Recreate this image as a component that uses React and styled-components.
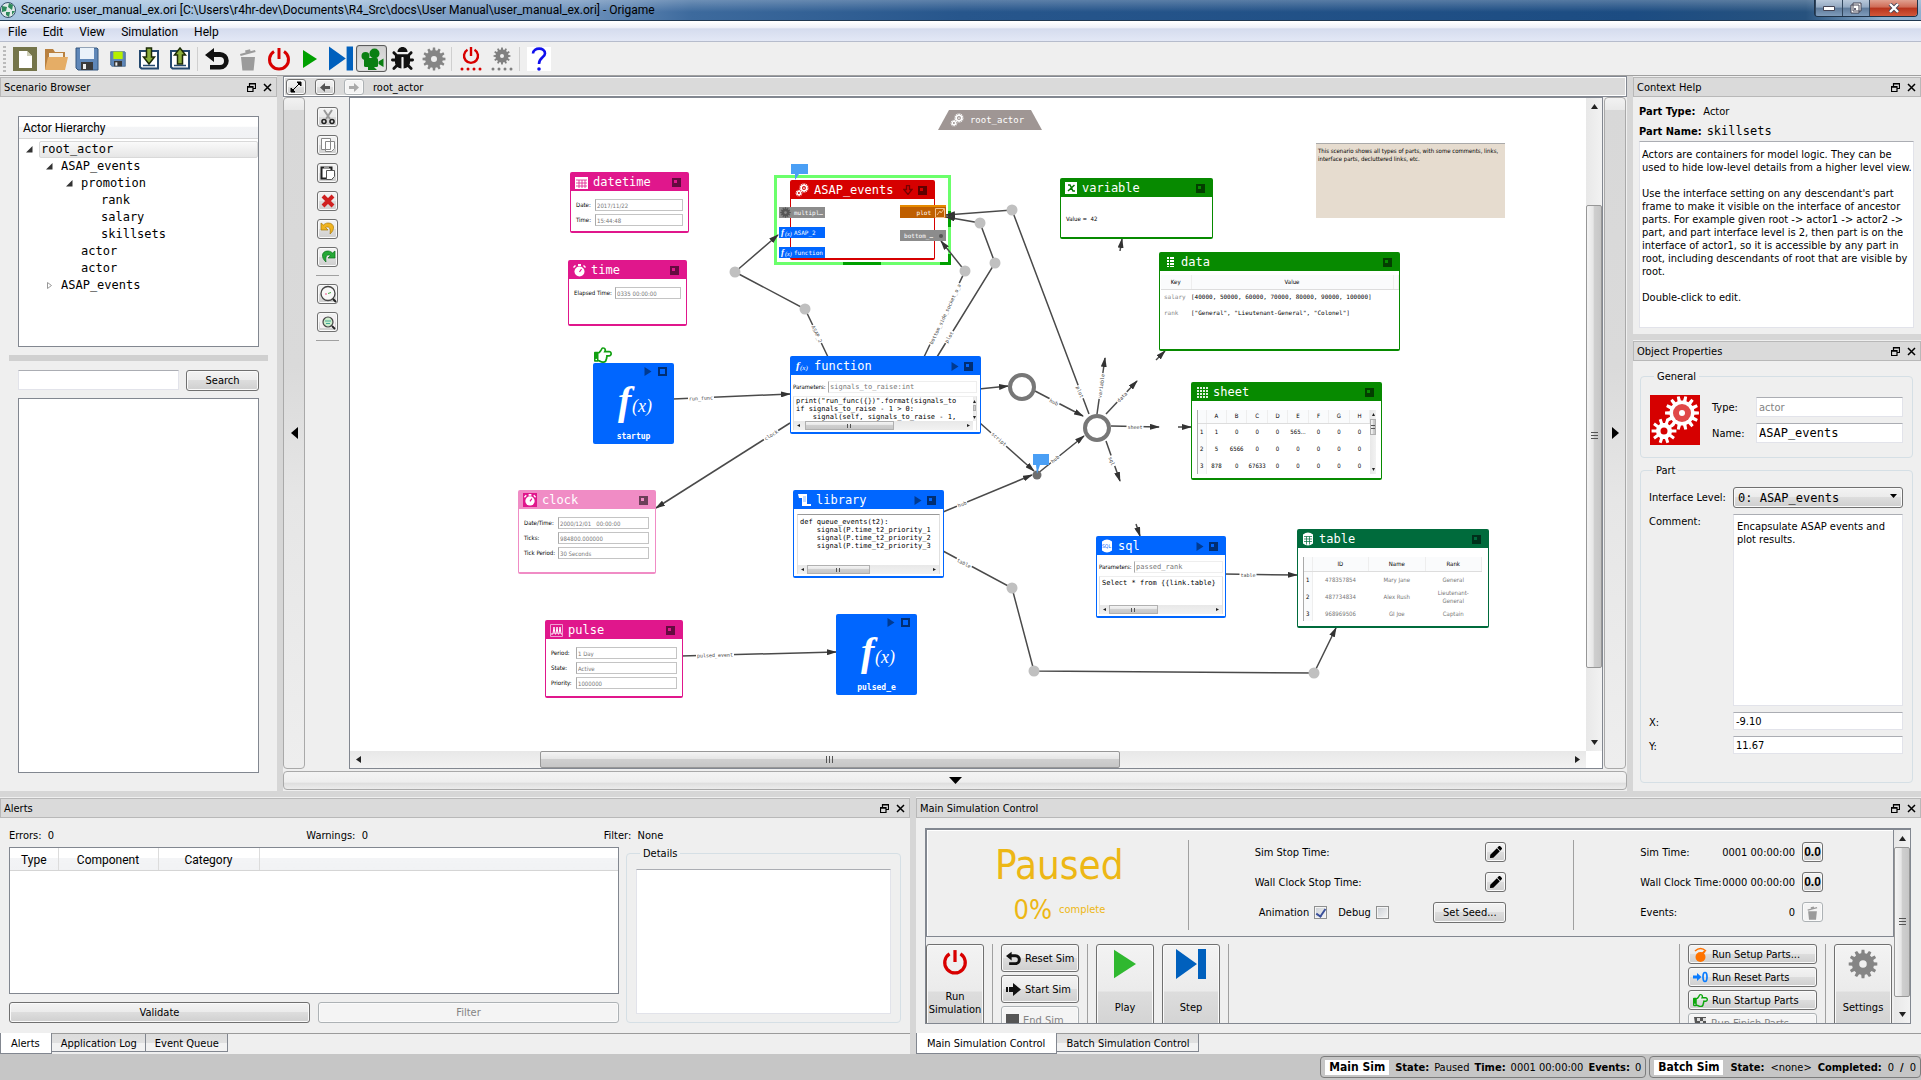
import React from "react";
import styled, { createGlobalStyle, css } from "styled-components";
import { FaBug, FaRegHandPointRight, FaPen } from "react-icons/fa";

const UI = '"DejaVu Sans Condensed", "Noto Sans", sans-serif';
const SEGOE = 'Roboto, "Open Sans", sans-serif';
const MONO = '"DejaVu Sans Mono", "Liberation Mono", monospace';
const SERIF = '"Liberation Serif", "DejaVu Serif", serif';

const PINK = "#e0178c";
const BLUE = "#0066ff";
const GREEN = "#078a00";

const Global = createGlobalStyle`
  * { box-sizing: border-box; }
  body { margin: 0; background: #efefef; }
  button, input, select, textarea { font: inherit; color: inherit; margin: 0; padding: 0; border-radius: 0; }
  svg { display: block; flex: none; }
`;

/* ---------- window chrome ---------- */

const Window = styled.div`
  height: 100vh;
  display: flex;
  flex-direction: column;
  background: #efefef;
  color: #000;
  font: 11px/13px ${UI};
  overflow: hidden;
`;

const TitleBar = styled.header`
  flex: none;
  height: 21px;
  display: flex;
  align-items: center;
  gap: 5px;
  padding: 0 3px 0 0;
  border-bottom: 1px solid #203850;
  font: 12px/16px ${SEGOE};
  background: linear-gradient(rgba(255, 255, 255, 0.25), rgba(255, 255, 255, 0) 60%),
    linear-gradient(90deg, #a9c6e2 0, #9dbbd9 18%, #7c9dc4 24%, #6f93bd 30%, #3d6a9d 36%, #27568c 50%, #1c4c82 85%, #27527e 94%, #8fb0cf 98%);
`;

const TitleText = styled.h1`
  margin: 0;
  flex: 1;
  font: inherit;
  white-space: nowrap;
`;

const Caption = styled.div`
  display: flex;
  align-self: flex-start;
  height: 17px;
  border: 1px solid #1e3248;
  border-top: 0;
  border-radius: 0 0 4px 4px;
  overflow: hidden;
`;

const CaptionButton = styled.button`
  width: ${(p) => (p.$close ? 48 : 27)}px;
  display: grid;
  place-items: center;
  border: 0;
  border-left: 1px solid #32475e;
  background: ${(p) =>
    p.$close
      ? "linear-gradient(#e0a090 0, #cf6a55 45%, #b7331c 50%, #d3573a 100%)"
      : "linear-gradient(#b8c8da 0, #93a9c2 45%, #5f7b9b 50%, #7f9cbb 100%)"};
`;

const MenuBar = styled.nav`
  flex: none;
  height: 21px;
  display: flex;
  align-items: center;
  gap: 16px;
  padding: 0 8px;
  border-top: 1px solid #fff;
  border-bottom: 1px solid #b6bccc;
  background: linear-gradient(#fff 0, #eef0f8 30%, #d5dcee 36%, #e3e8f6 100%);
  font: 12px/16px ${SEGOE};
`;

const MenuButton = styled.button`
  border: 0;
  background: none;
`;

const Toolbar = styled.div`
  flex: none;
  height: 34px;
  display: flex;
  align-items: center;
  border-bottom: 1px solid #a0a0a0;
`;

const Grip = styled.div`
  width: 3px;
  height: 26px;
  margin: 0 3px;
  background: repeating-linear-gradient(#bbb 0 2px, transparent 2px 4px);
`;

const ToolButton = styled.button`
  width: 31px;
  height: 27px;
  display: grid;
  place-items: center;
  border: 1px solid transparent;
  border-radius: 3px;
  background: none;
  ${(p) =>
    p.$pressed &&
    css`
      border-color: #5c5c5c;
      background: linear-gradient(#cfcfcf, #e6e6e6);
      box-shadow: inset 0 0 1px #777;
    `}
`;

const ToolSep = styled.div`
  width: 1px;
  height: 24px;
  margin: 0 3px 0 2px;
  background: #cfcfcf;
`;

/* ---------- docks ---------- */

const Middle = styled.main`
  flex: 1;
  min-height: 0;
  display: flex;
`;

const HSplit = styled.div`
  flex: none;
  height: 6px;
  background: #d6d6d6;
`;

const VSplit = styled.div`
  flex: none;
  width: 6px;
  background: #d6d6d6;
`;

const Dock = styled.section`
  flex: ${(p) => p.$flex || "none"};
  width: ${(p) => p.$width || "auto"};
  min-width: 0;
  min-height: 0;
  display: flex;
  flex-direction: column;
`;

const DockTitle = styled.header`
  flex: none;
  height: 20px;
  display: flex;
  align-items: center;
  gap: 5px;
  margin-top: 1px;
  padding: 0 3px;
  border: 1px solid #b8b8b8;
  background: #dadada;
`;

const DockName = styled.h2`
  flex: 1;
  margin: 0;
  font: inherit;
`;

const IconButton = styled.button`
  width: 11px;
  height: 11px;
  display: grid;
  place-items: center;
  border: 0;
  background: none;
`;

const raised = css`
  border: 1px solid ${(p) => (p.disabled ? "#adb2b5" : "#707070")};
  border-radius: 3px;
  color: ${(p) => (p.disabled ? "#838383" : "#000")};
  background: ${(p) => (p.disabled ? "#f4f4f4" : "linear-gradient(#f3f3f3 0, #ebebeb 49%, #dddddd 50%, #cfcfcf 100%)")};
  box-shadow: inset 0 0 0 1px #fafafa;
`;

const sunken = css`
  border: 1px solid #e2e3ea;
  border-top-color: #abadb3;
  background: #fff;
`;

const PushButton = styled.button`
  ${raised}
  height: ${(p) => p.$height || 21}px;
  width: ${(p) => p.$width || "auto"};
  flex: ${(p) => p.$flex || "none"};
  display: flex;
  align-items: center;
  justify-content: ${(p) => (p.$left ? "flex-start" : "center")};
  gap: 4px;
  padding: 0 ${(p) => (p.$left ? 4 : 0)}px;
  white-space: nowrap;
`;

const TextField = styled.input`
  ${sunken}
  width: 100%;
  min-width: 0;
  height: ${(p) => p.$height || 20}px;
  padding: 0 2px;
  color: ${(p) => (p.readOnly ? "#838383" : "#000")};
  font-family: ${(p) => (p.$mono ? MONO : UI)};
  font-size: ${(p) => (p.$mono ? 12 : 11)}px;
`;

const TextArea = styled.textarea`
  ${sunken}
  display: block;
  width: 100%;
  flex: 1;
  min-height: 0;
  padding: ${(p) => p.$pad || "5px 3px"};
  resize: none;
  outline: 0;
`;

const Group = styled.fieldset`
  margin: 0;
  min-width: 0;
  border: 1px solid #d5dfe5;
  border-radius: 4px;
  padding: ${(p) => p.$pad};
  display: flex;
  flex-direction: ${(p) => (p.$column ? "column" : "row")};
  flex: ${(p) => p.$flex || "none"};
  gap: 12px;
`;

const Legend = styled.legend`
  margin-left: 4px;
  padding: 0 3px;
`;

/* ---------- scenario browser ---------- */

const BrowserBody = styled.div`
  flex: 1;
  min-height: 0;
  display: flex;
  flex-direction: column;
  padding: 19px 9px 18px;
`;

const Box = styled.div`
  border: 1px solid #828790;
  background: #fff;
  margin: 0 9px;
  flex: ${(p) => p.$flex};
`;

const BoxHead = styled.div`
  height: 22px;
  padding: 2px 4px 0;
  border-bottom: 1px solid #d5d5d5;
  background: linear-gradient(#fff 0, #fff 45%, #f3f4f6 46%, #f1f2f4 100%);
  font: 12px/18px ${SEGOE};
`;

const Tree = styled.ul`
  margin: 0;
  padding: 2px 0 0;
  list-style: none;
  font: 12px/17px ${MONO};
`;

const TreeItem = styled.li`
  display: flex;
  align-items: center;
  height: 17px;
  padding-left: ${(p) => 7 + p.$depth * 20}px;
`;

const Twisty = styled.span`
  width: 13px;
`;

const TreeLabel = styled.span`
  flex: 1;
  padding-left: 1px;
  border: 1px solid ${(p) => (p.$selected ? "#d9d9d9" : "transparent")};
  border-radius: 2px;
  line-height: 15px;
  background: ${(p) => (p.$selected ? "linear-gradient(#fafafa, #e6e6e6)" : "none")};
`;

const Bar = styled.div`
  flex: none;
  height: 6px;
  margin: 8px 0 9px;
  background: #d0d0d0;
`;

const SearchRow = styled.form`
  display: flex;
  gap: 7px;
  margin: 0 9px 7px;
`;

/* ---------- canvas area ---------- */

const Center = styled.section`
  flex: 1;
  min-width: 0;
  display: flex;
  flex-direction: column;
`;

const PathBar = styled.div`
  flex: none;
  height: 21px;
  display: flex;
  align-items: center;
  gap: 9px;
  padding: 1px 2px 0;
  border: 1px solid #828790;
  box-shadow: inset 0 0 0 1px #fff;
  background: #dadada;
`;

const CanvasRow = styled.div`
  flex: 1;
  min-height: 0;
  display: flex;
  padding-right: 1px;
`;

const Strip = styled.button`
  flex: none;
  display: grid;
  place-items: center;
  border: 1px solid #a9a9a9;
  border-radius: 4px;
  ${(p) =>
    p.$horizontal
      ? css`
          height: 19px;
          margin: 2px 0 1px;
          background: linear-gradient(#f4f4f4 0, #eee 60%, #dedede 65%, #ececec 100%);
        `
      : css`
          width: 22px;
          background: linear-gradient(#f2f2f2 0, #e8e8e8 12px, #d8d8d8 12px, #dadada 40%, #e6e6e6 60%, #eee 100%);
        `}
`;

const Tools = styled.div`
  flex: none;
  width: 44px;
  display: flex;
  flex-direction: column;
  align-items: center;
  gap: 8px;
  padding: 10px 0 0 1px;
`;

const ToolsRule = styled.div`
  width: 23px;
  height: 1px;
  background: #a0a0a0;
`;

const CanvasFrame = styled.div`
  flex: 1;
  min-width: 0;
  display: grid;
  grid-template: 1fr 17px / 1fr 16px;
  margin-right: 1px;
  border: 1px solid #828790;
  background: #fff;
`;

const Scene = styled.div`
  position: relative;
  overflow: hidden;
  background: #fff;
`;

const Scroll = styled.div`
  display: flex;
  flex-direction: ${(p) => (p.$h ? "row" : "column")};
  align-items: stretch;
  background: ${(p) => (p.$h ? "linear-gradient(#e8e8e8, #f2f2f2)" : "linear-gradient(90deg, #e8e8e8, #f2f2f2)")};
  min-width: 0;
  min-height: 0;
`;

const ScrollEnd = styled.button`
  flex: none;
  ${(p) => (p.$h ? "width" : "height")}: ${(p) => p.$size}px;
  display: grid;
  place-items: center;
  border: 0;
  background: none;
`;

const Thumb = styled.div`
  flex: ${(p) => p.$grow} 1 0;
  display: grid;
  place-items: center;
  border: 1px solid ${(p) => (p.$small ? "#b0b0b0" : "#979797")};
  border-radius: ${(p) => (p.$small ? 0 : 2)}px;
  background: linear-gradient(${(p) => (p.$h ? "180deg" : "90deg")}, #f4f4f4 0, #e6e6e6 45%, #cfcfcf 50%, #c6c6c6 100%);
`;

const Space = styled.div`
  flex: ${(p) => p.$grow} 1 0;
`;

const GripLines = styled.span`
  ${(p) =>
    p.$h
      ? `width: ${p.$size}px; height: ${p.$size - 1}px; background: repeating-linear-gradient(90deg, #555 0 1px, transparent 1px 3px);`
      : `height: ${p.$size}px; width: ${p.$size - 1}px; background: repeating-linear-gradient(#555 0 1px, transparent 1px 3px);`}
`;

/* ---------- scene parts ---------- */

// Scene coordinates of the point shown at the viewport's top-left corner.
const ORIGIN = { x: 350, y: 98 };

const Placed = styled.div`
  position: absolute;
  left: ${(p) => p.$x - ORIGIN.x}px;
  top: ${(p) => p.$y - ORIGIN.y}px;
  width: ${(p) => p.$w}px;
  height: ${(p) => p.$h}px;
`;

const Part = styled(Placed)`
  display: flex;
  flex-direction: column;
  border: 1px solid ${(p) => p.$color};
  border-bottom-width: 2px;
  border-radius: 2px;
  background: #fff;
`;

const PartHead = styled.div`
  flex: none;
  height: 18px;
  display: flex;
  align-items: center;
  gap: 5px;
  padding: 0 7px 0 4px;
  background: ${(p) => p.$color};
  color: #fff;
  font: 12px/16px ${MONO};
`;

const PartTitle = styled.span`
  flex: 1;
  white-space: nowrap;
`;

const PartBody = styled.div`
  flex: 1;
  min-height: 0;
  display: flex;
  flex-direction: column;
  gap: 3px;
  padding: ${(p) => p.$pad};
  font-size: 6px;
  line-height: 8px;
`;

const Field = styled.label`
  display: grid;
  grid-template-columns: ${(p) => p.$label}px 1fr;
  align-items: center;
  white-space: nowrap;
`;

const TinyInput = styled.input`
  width: 100%;
  min-width: 0;
  height: 12px;
  padding: 0 1px;
  border: 1px solid ${(p) => (p.$mono ? "#eee" : "#c4c4c4")};
  border-left-color: #aaa;
  background: #fff;
  color: #777;
  font-family: ${(p) => (p.$mono ? MONO : UI)};
  font-size: ${(p) => (p.$mono ? 7 : 6)}px;
`;

const CodeBox = styled.div`
  flex: 1;
  min-height: 0;
  display: grid;
  grid-template: minmax(0, 1fr) 9px / minmax(0, 1fr) auto;
  border: 1px solid #e0e0e0;
  border-width: 1px 1px 0;
  border-top-color: ${(p) => (p.$line ? "#999" : "#eee")};
  overflow: hidden;
`;

const Code = styled.pre`
  margin: 0;
  padding: ${(p) => p.$top || 0}px 0 0 2px;
  overflow: hidden;
  font: 7px/8px ${MONO};
`;

const FxTile = styled(Placed)`
  display: flex;
  flex-direction: column;
  align-items: center;
  border-radius: 2px;
  background: ${BLUE};
  color: #fff;
`;

const TileTools = styled.div`
  align-self: flex-end;
  display: flex;
  align-items: center;
  gap: 6px;
  padding: 4px 7px 2px 0;
`;

const TileName = styled.span`
  font: bold 8px/10px ${MONO};
  margin-top: auto;
  padding-bottom: 2px;
`;

const Selection = styled(Placed)`
  border: 3px solid #6bff6b;
`;

const SelectionMark = styled(Placed)`
  background: #00a000;
`;

const Ports = styled.div`
  position: absolute;
  top: ${(p) => (p.$side === "left" ? 26 : 24)}px;
  ${(p) => p.$side}: -12px;
  display: flex;
  flex-direction: column;
  gap: ${(p) => (p.$side === "left" ? 9 : 12)}px;
`;

const Port = styled.div`
  width: 46px;
  height: ${(p) => (p.$tall ? 13 : 11)}px;
  display: flex;
  align-items: center;
  justify-content: ${(p) => (p.$end ? "flex-end" : "flex-start")};
  gap: ${(p) => p.$gap || 0}px;
  padding: 0 1px;
  border-top: ${(p) => (p.$tall ? "2px solid #e68a00" : "0")};
  background: ${(p) => p.$color};
  color: #fff;
  font: 6px/9px ${MONO};
`;

const Banner = styled(Placed)`
  display: flex;
  align-items: center;
  justify-content: center;
  gap: 6px;
  padding-right: 6px;
  background: #9f9694;
  clip-path: polygon(11px 0, 93px 0, 100% 100%, 0 100%);
  color: #fff;
  font: 9px/12px ${MONO};
`;

const Note = styled(Placed)`
  padding: 3px 2px;
  border-top: 1px solid #aaa;
  background: #e6dccf;
  font-size: 6px;
  line-height: 8px;
`;

const LinkLayer = styled.svg`
  position: absolute;
  inset: 0;
  width: 100%;
  height: 100%;
`;

const Grid = styled.table`
  width: 100%;
  border-collapse: collapse;
  table-layout: fixed;
  font-size: 6px;
  line-height: 8px;
  text-align: center;
  th { padding: 0; font-weight: normal; height: ${(p) => p.$head}px; background: #fafbfc; border-right: 1px solid #eee; }
  thead th { border-bottom: 1px solid #ddd; }
  td { padding: 0; height: ${(p) => p.$row}px; color: ${(p) => p.$color || "#000"}; white-space: pre-line; }
`;

const Col = styled.col`
  width: ${(p) => p.$w}px;
`;

const DataTable = styled(Grid)`
  td { text-align: left; font-family: ${MONO}; white-space: nowrap; }
  td:first-child { color: #888; padding-left: 3px; }
`;

const GridRow = styled.div`
  display: flex;
  border-left: 1px solid #aaa;
  min-height: 0;
  overflow: hidden;
`;

/* ---------- bottom docks ---------- */

const Bottom = styled.div`
  flex: none;
  height: 257px;
  display: flex;
`;

const Tabs = styled.div`
  flex: none;
  height: 21px;
  display: flex;
  align-items: flex-start;
  border-top: 1px solid #9b9b9b;
`;

const Tab = styled.button`
  padding: 0 ${(p) => (p.$active ? 11 : 8)}px 0 ${(p) => (p.$active ? 10 : 9)}px;
  height: ${(p) => (p.$active ? 21 : 18)}px;
  border: 1px solid #828790;
  border-width: 0 1px 1px ${(p) => (p.$active ? 1 : 0)}px;
  margin-top: ${(p) => (p.$active ? -1 : 0)}px;
  padding-top: 1px;
  background: ${(p) => (p.$active ? "#fff" : "linear-gradient(#dcdcdc 0, #e0e0e0 50%, #f2f2f2 55%, #f2f2f2 100%)")};
`;

const AlertsBody = styled.div`
  flex: 1;
  min-height: 0;
  display: flex;
  flex-direction: column;
  padding: 11px 9px 10px;
`;

const Counts = styled.div`
  display: grid;
  grid-template-columns: 1fr 1fr 1fr;
  height: 14px;
`;

const AlertsColumns = styled.div`
  flex: 1;
  min-height: 0;
  display: grid;
  grid-template-columns: 610px 1fr;
  gap: 7px;
  margin-top: 4px;
`;

const AlertsLeft = styled.div`
  display: flex;
  flex-direction: column;
  gap: 8px;
`;

const AlertsTableBox = styled.div`
  flex: 1;
  border: 1px solid #828790;
  background: #fff;
`;

const AlertsTable = styled.table`
  width: 100%;
  border-collapse: collapse;
  table-layout: fixed;
  font: 12px/16px ${SEGOE};
  th {
    height: 22px;
    padding: 3px 0 0;
    font-weight: normal;
    border-right: 1px solid #dcdcdc;
    border-bottom: 1px solid #d5d5d5;
    background: linear-gradient(#fff 0, #fff 45%, #f3f4f6 46%, #f1f2f4 100%);
  }
  th:last-child { border-right: 0; }
`;

const Buttons = styled.div`
  display: flex;
  gap: 8px;
`;

const SimFrame = styled.div`
  flex: 1;
  min-height: 0;
  display: flex;
  margin: 10px 10px 9px 9px;
  border: 1px solid #828790;
  border-width: 2px 1px 1px;
`;

const SimMain = styled.div`
  flex: 1;
  min-width: 0;
  display: flex;
  flex-direction: column;
  overflow: hidden;
`;

const SimInfo = styled.div`
  flex: none;
  height: 107px;
  display: grid;
  grid-template-columns: minmax(0, 261fr) 1px minmax(0, 385fr) 1px minmax(0, 319fr);
  padding: 10px 0;
  border: 1px solid #828790;
  border-width: 0 1px 1px;
  box-shadow: inset 1px 1px 0 #fff;
`;

const SimState = styled.div`
  display: flex;
  flex-direction: column;
  align-items: center;
  padding-left: 4px;
  color: #edb715;
`;

const Paused = styled.div`
  font-size: 40px;
  line-height: 50px;
`;

const Percent = styled.div`
  display: flex;
  align-items: center;
  gap: 7px;
  font-size: 27px;
  line-height: 40px;
`;

const Small = styled.span`
  font-size: 11px;
`;

const Rule = styled.div`
  flex: none;
  width: 1px;
  align-self: stretch;
  background: #a0a0a0;
`;

const SimCol = styled.div`
  display: flex;
  flex-direction: column;
  gap: 10px;
  padding: 2px ${(p) => p.$right}px 0 66px;
`;

const SimRow = styled.div`
  display: flex;
  align-items: center;
  height: 20px;
  gap: 7px;
  white-space: nowrap;
`;

const Fill = styled.span`
  flex: 1;
  min-width: 0;
`;

const CheckLabel = styled.label`
  display: flex;
  align-items: center;
  gap: 5px;
  margin-left: 4px;
`;

const Check = styled.input`
  appearance: none;
  position: relative;
  width: 13px;
  height: 13px;
  border: 1px solid #8e8f8f;
  background: linear-gradient(135deg, #cbcfd5, #f6f6f6);
  box-shadow: inset 0 0 0 1px #f4f4f4;
  &:checked::after {
    content: "";
    position: absolute;
    left: 3px;
    top: 0;
    width: 4px;
    height: 8px;
    border: solid #3a4f9a;
    border-width: 0 2px 2px 0;
    transform: rotate(35deg);
  }
`;

const SimActions = styled.div`
  flex: none;
  display: flex;
  align-items: flex-start;
  gap: 8px;
  padding: 7px 2px 0 0;
  height: 120px;
`;

const BigButton = styled.button`
  ${raised}
  flex: none;
  width: 58px;
  height: 96px;
  display: flex;
  flex-direction: column;
  align-items: center;
  padding: 4px 0 0;
`;

const BigLabel = styled.span`
  flex: 1;
  display: grid;
  place-items: center;
  padding-bottom: ${(p) => (p.$two ? 8 : 4)}px;
`;

const Stack = styled.div`
  display: flex;
  flex-direction: column;
  gap: 3px;
`;

const SimScroll = styled.div`
  flex: none;
  width: 16px;
  display: grid;
`;

const StatusBar = styled.footer`
  flex: none;
  height: 26px;
  display: flex;
  justify-content: flex-end;
  gap: 3px;
  padding: 2px 0;
  background: #c6c6c6;
`;

const StatusBox = styled.div`
  display: flex;
  align-items: center;
  gap: ${(p) => p.$gap}px;
  padding: 0 4px;
  border: 1px solid #7c7c7c;
  border-radius: 4px;
  white-space: nowrap;
`;

const StatusName = styled.b`
  padding: 1px 4px;
  margin-right: 1px;
  background: #fff;
  font-size: 12px;
`;

/* ---------- properties ---------- */

const HelpBody = styled.div`
  flex: 1;
  min-height: 0;
  display: flex;
  flex-direction: column;
  padding: 4px 7px 6px 6px;
`;

const HelpLine = styled.div`
  display: flex;
  gap: ${(p) => (p.$mono ? 5 : 8)}px;
  height: 20px;
  align-items: center;
`;

const Mono = styled.span`
  font: 12px/14px ${MONO};
`;

const PropsBody = styled.div`
  flex: 1;
  min-height: 0;
  display: flex;
  flex-direction: column;
  gap: 6px;
  padding: 9px 8px 8px 7px;
`;

const PropGrid = styled.div`
  flex: 1;
  min-height: 0;
  display: grid;
  grid-template-columns: ${(p) => p.$label}px 1fr;
  grid-template-rows: ${(p) => p.$rows};
  gap: 6px 0;
  padding-top: ${(p) => p.$top || 0}px;
`;

const PropLabel = styled.label`
  padding-top: ${(p) => (p.$tall ? 1 : 4)}px;
  white-space: nowrap;
`;

const SelectWrap = styled.div`
  position: relative;
  svg { position: absolute; right: 6px; top: 7px; }
`;

const Select = styled.select`
  ${raised}
  appearance: none;
  width: 100%;
  height: 21px;
  padding: 0 4px;
  font: 12px/16px ${MONO};
`;

/* ---------- drawings ---------- */

function gearPath(cx, cy, outer, inner, hole, teeth) {
  const step = Math.PI / teeth;
  const pts = [];
  for (let i = 0; i < teeth; i++) {
    const a = i * 2 * step;
    [[inner, -0.62], [outer, -0.38], [outer, 0.38], [inner, 0.62]].forEach(([r, k]) => {
      pts.push(`${(cx + r * Math.cos(a + k * step)).toFixed(2)} ${(cy + r * Math.sin(a + k * step)).toFixed(2)}`);
    });
  }
  return `M${pts.join("L")}ZM${cx - hole} ${cy}a${hole} ${hole} 0 1 0 ${hole * 2} 0a${hole} ${hole} 0 1 0 ${-hole * 2} 0Z`;
}

const Svg = ({ s = 24, w, h, vb = "0 0 24 24", children }) => (
  <svg width={w || s} height={h || s} viewBox={vb} aria-hidden="true">{children}</svg>
);

const Gear = ({ s = 24, color = "#858585" }) => (
  <Svg s={s}><path fillRule="evenodd" fill={color} d={gearPath(12, 12, 11.5, 8.8, 3, 12)} /></Svg>
);

const Gears = ({ s, disc }) => (
  <Svg s={s} vb="0 0 50 50">
    <path fillRule="evenodd" fill="#fff" d={gearPath(32, 18, 17, 12.5, 7, 14)} />
    <path fillRule="evenodd" fill="#fff" d={gearPath(14, 36, 12.5, 8, 3.5, 10)} />
    {disc && <circle cx="32" cy="18" r="9" fill="#e04848" />}
    <circle cx="32" cy="18" r="3" fill="#fff" />
  </Svg>
);

const Power = ({ s = 24, color = "#d80000" }) => (
  <Svg s={s}><g fill="none" stroke={color} strokeWidth="3"><path d="M7 4.5a9.5 9.5 0 1 0 10 0" /><path d="M12 1v11" /></g></Svg>
);

const Trash = ({ s = 24, color = "#9b9b9b" }) => (
  <Svg s={s}><g fill={color}><path d="M4 7l15-4 .6 2L4.6 9zM9 3.6l5-1.4.6 2-5 1.3zM5 10h14l-1.4 13.5H6.4z" /></g></Svg>
);

const Back = ({ s = 24 }) => (
  <Svg s={s}><path d="M0 8L9 1v4h6a8.500 8.500 0 0 1 0 17.500H5v-4.500h10a4 4 0 0 0 0-8H9v5z" fill="#111" /></Svg>
);

const Play = ({ w = 14, h = 18, color = "#00a000" }) => (
  <Svg w={w} h={h} vb="0 0 14 18"><path d="M0 0L14 9L0 18Z" fill={color} /></Svg>
);

const StepIcon = ({ w = 24, h = 25 }) => (
  <Svg w={w} h={h} vb="0 0 30 30"><path d="M0 0L21 15L0 30ZM22 0h8v30h-8z" fill="#0060bd" /></Svg>
);

const Restore = () => (
  <Svg s={9} vb="0 0 9 9"><path d="M2.500 3V.5h6v5H6M2.500 1h6M.5 3.500h5.500v5H.5zM.5 4.200h5.500" fill="none" stroke="#000" strokeWidth="1.200" /></Svg>
);

const Close = () => (
  <Svg s={9} vb="0 0 9 9"><path d="M1 1l7 7M8 1l-7 7" stroke="#000" strokeWidth="1.500" /></Svg>
);

const Tri = ({ dir, w = 8, h = 5, color = "#222" }) => {
  const shapes = { up: "0,10 5,0 10,10", down: "0,0 10,0 5,10", left: "10,0 0,5 10,10", right: "0,0 10,5 0,10" };
  return (
    <svg width={w} height={h} viewBox="0 0 10 10" preserveAspectRatio="none" aria-hidden="true">
      <polygon points={shapes[dir]} fill={color} />
    </svg>
  );
};

const Floppy = ({ s = 24, label = "#eaf2fa" }) => (
  <Svg s={s}>
    <path d="M1 1h21l1 1v21H3l-2-2z" fill="#5f87b8" stroke="#34577f" />
    <path d="M5 1h14v11H5z" fill={label} />
    <path d="M6 15h12v8H6z" fill="#3a3a3a" /><path d="M8 17h3v5H8z" fill="#eee" />
  </Svg>
);

const BoxArrow = ({ up }) => (
  <Svg>
    <path d="M3 4h18v17.500H4.500L3 20z" fill="#fff" stroke="#24486e" strokeWidth="2" />
    <path d="M6 18.500h12" stroke="#24486e" strokeWidth="1.500" />
    <path d={up ? "M12 1l5.500 7h-3v9h-5V8h-3z" : "M12 17l5.500-7h-3V1h-5v9h-3z"} fill="#8aad3a" stroke="#1c2b08" strokeWidth="1.500" />
  </Svg>
);

const Dotted = ({ color, children }) => (
  <Svg>
    {children}
    {[3, 9, 15, 21].map((x) => <circle key={x} cx={x} cy="22" r="1.500" fill={color} />)}
  </Svg>
);

const TOOLBAR = [
  ["New", <Svg><path fill="#75754a" d="M0 0h24v24H0z" /><path fill="#fff" d="M6 4h8l5 5v12H6z" /><path fill="#cfcfb8" d="M14 4v5h5z" /></Svg>],
  ["Open", <Svg><path fill="#b98140" d="M1 2h8l2 3h10v17H1z" /><path fill="#f5f0e6" d="M5 6h14v8H5z" /><path fill="#e5ad66" d="M4 10h20l-3 13H1z" /></Svg>],
  ["Save", <Floppy />],
  ["Save as", <Floppy s={16} label="#b6f000" />],
  ["Import", <BoxArrow />],
  ["Export", <BoxArrow up />],
  null,
  ["Undo", <Back />],
  ["Delete", <Trash />],
  ["Run", <Power />],
  ["Play", <Play />],
  ["Step", <StepIcon />],
  ["Animation", <Svg><g fill="#0a7f12"><circle cx="14.500" cy="6.500" r="5" /><circle cx="5.500" cy="9" r="4" /><rect x="4" y="11" width="14" height="9" rx="1.500" /><path d="M18.500 14.500l5-3v8.500l-5-3zM8 20h6l3 3H8z" /></g></Svg>, true],
  ["Debug", <FaBug size={23} color="#111" />],
  ["Settings", <Gear />],
  null,
  ["Run batch", <Dotted color="#d80000"><g fill="none" stroke="#d80000" strokeWidth="2.400"><path d="M8.500 2.800a7 7 0 1 0 7 0" /><path d="M12 0v9" /></g></Dotted>],
  ["Batch settings", <Dotted color="#808080"><path fillRule="evenodd" fill="#808080" d={gearPath(12, 9, 8.5, 6.5, 2, 12)} /></Dotted>],
  null,
  ["Help", <Svg><path fill="#fff" d="M0 0h24v24H0z" /><path d="M6 6.500C6.500 0 18 0 18 6.500c0 4-6 4-6 10.500" fill="none" stroke="#1010ee" strokeWidth="2.600" /><circle cx="12" cy="22" r="1.800" fill="#1010ee" /></Svg>],
];

const EDIT_TOOLS = [
  ["Cut", <Svg s={16} vb="0 0 16 16"><path d="M4 1l6 9M12 1l-6 9" stroke="#999" strokeWidth="2" /><g fill="none" stroke="#222" strokeWidth="1.600"><circle cx="4" cy="12.500" r="2" /><circle cx="12" cy="12.500" r="2" /></g></Svg>],
  ["Copy", <Svg s={16} vb="0 0 16 16"><path d="M1.500 1.500h9v11h-9zM5.500 4.500h9v7l-3 3h-6z" fill="#fff" stroke="#888" /></Svg>],
  ["Paste", <Svg s={16} vb="0 0 16 16"><path d="M1.500 2.500h10v11h-10z" fill="#fff" stroke="#222" strokeWidth="2" /><path d="M4 1h5v3H4z" fill="#999" /><path d="M6.500 5.500h8v6l-3 3h-5z" fill="#fff" stroke="#555" /></Svg>],
  ["Remove", <Svg s={14} vb="0 0 14 14"><path d="M2 2l10 10M12 2L2 12" stroke="#d02020" strokeWidth="4" /></Svg>],
  ["Undo", <Svg s={16} vb="0 0 16 16"><path d="M1 2v7h7L5.500 6.500C9 5 11 7 10 13c5-4 5-11-2-11-2 0-3.500 1-4.500 2z" fill="#f0b420" stroke="#a87808" strokeWidth=".7" /></Svg>],
  ["Redo", <Svg s={16} vb="0 0 16 16"><path d="M15 2v7H8l2.500-2.500C7 5 5 7 6 13c-5-4-5-11 2-11 2 0 3.500 1 4.500 2z" fill="#25a835" stroke="#0a7018" strokeWidth=".7" /></Svg>],
  null,
  ["Zoom to fit", <Svg s={18} vb="0 0 18 18"><circle cx="9" cy="8.500" r="7" fill="#f8f8f8" stroke="#444" strokeWidth="1.300" /><path d="M14 14l3 3" stroke="#222" strokeWidth="2" /><path d="M6 9h2" stroke="#e58" /><path d="M9 8.500l3-1" stroke="#4a4" /></Svg>],
  ["Zoom to selection", <Svg s={18} vb="0 0 18 18"><path d="M1 4h15v11H1z" fill="#f6f0f4" /><circle cx="9" cy="9" r="5" fill="#cdeccc" stroke="#444" strokeWidth="1.200" /><path d="M13 13l3 3" stroke="#222" strokeWidth="1.800" /><path d="M6 8h6M7 10.500h4" stroke="#4a9" /></Svg>],
  null,
];

const ICONS = {
  calendar: <Svg s={13} vb="0 0 13 13"><path d="M0 1h13v12H0z" fill="#fff" /><path d="M1 4h11M1 7h11M1 10h11M4 4v8M7 4v8M10 4v8" stroke={PINK} strokeWidth=".8" /></Svg>,
  watch: <Svg s={13} vb="0 0 13 13"><circle cx="6.500" cy="7.500" r="5" fill="#fff" /><path d="M5 0h3v2H5zM0 3l2-2 1 1-2 2zM13 3l-2-2-1 1 2 2z" fill="#fff" /><path d="M6.500 8l2-3" stroke={PINK} strokeWidth="1.200" /></Svg>,
  clock: <Svg s={14} vb="0 0 15 15"><path d="M0 0h15v15H0z" fill={PINK} /><circle cx="7.500" cy="8.500" r="5" fill="#fff" /><path d="M6 1h3v2H6zM1 4l2-2 1 1-2 2zM14 4l-2-2-1 1 2 2z" fill="#fff" /><path d="M7.500 9l2-3" stroke={PINK} strokeWidth="1.200" /></Svg>,
  pulse: <Svg s={13} vb="0 0 13 13"><path d="M.5.5h12v12H.5z" fill="none" stroke="#f0a0d0" /><path d="M1 10h2l1-7 1 7h1l1-7 1 7h1l1-7 1 7h1" fill="none" stroke="#fff" /></Svg>,
  fx: <Svg w={14} h={14} vb="0 0 14 14"><text x="1" y="10" fill="#fff" fontFamily={SERIF} fontStyle="italic" fontWeight="bold" fontSize="11">f</text><text x="5" y="11" fill="#fff" fontFamily={SERIF} fontStyle="italic" fontSize="7">(x)</text></Svg>,
  portFx: <Svg w={14} h={11} vb="0 0 14 11"><text x="1" y="8" fill="#fff" fontFamily={SERIF} fontStyle="italic" fontWeight="bold" fontSize="9">f</text><text x="5" y="9" fill="#fff" fontFamily={SERIF} fontStyle="italic" fontSize="6">(x)</text></Svg>,
  gears: <Gears s={14} />,
  scroll: <Svg s={13} vb="0 0 13 13"><path d="M0 0h9v10h4v2H4V4H1z" fill="#fff" /><path d="M5 3h3M5 5h3M5 7h3" stroke="#8ab8ff" /></Svg>,
  x: <Svg s={12} vb="0 0 12 12"><path d="M0 0h12v12H0z" fill="#fff" /><path d="M3 3h2l3 6h2M9.500 3L3 9" fill="none" stroke="#067800" strokeWidth="1.500" /></Svg>,
  list: <Svg s={12} vb="0 0 12 12"><path d="M3 1h2v2H3zM6 1h4v2H6zM3 4h2v2H3zM6 4h4v2H6zM3 7h2v2H3zM6 7h4v2H6zM3 10h2v1H3zM6 10h4v1H6z" fill="#fff" /></Svg>,
  grid: <Svg s={12} vb="0 0 12 12">{[1, 4, 7, 10].map((y) => <path key={y} d={`M1 ${y}h2v2H1zM4 ${y}h2v2H4zM7 ${y}h2v2H7zM10 ${y}h2v2H10z`} fill="#dff0df" />)}</Svg>,
  sql: <Svg w={12} h={14} vb="0 0 12 14"><path d="M1 2.500q5-4 10 0v9q-5 4-10 0z" fill="#fff" /><text x="1" y="9" fontSize="5" fontFamily={UI} fill={BLUE}>SQL</text></Svg>,
  table: <Svg w={12} h={14} vb="0 0 12 14"><path d="M1 2.500q5-4 10 0v9q-5 4-10 0z" fill="#fff" /><path d="M2 4.500h8M2 7h8M2 9.500h8M4.500 4.500v8M7.500 4.500v8" stroke="#006b3c" strokeWidth=".7" /></Svg>,
};

const MiniMark = ({ open }) => (
  <Svg s={9} vb="0 0 9 9">
    <path d="M1 1h7v7H1z" fill="none" stroke="#000" strokeOpacity=".55" strokeWidth="2" />
    {!open && <path d="M5 2h2v5H2V5h3z" fill="#000" fillOpacity=".55" />}
  </Svg>
);

function Scrollbar({ h, before, thumb, after, size = 17, grip = 8 }) {
  const small = size < 12;
  const [w, t] = small ? [3, 3] : [h ? 5 : 7, h ? 7 : 5];
  return (
    <Scroll $h={h}>
      <ScrollEnd type="button" $h={h} $size={size} aria-label={h ? "Scroll left" : "Scroll up"}><Tri dir={h ? "left" : "up"} w={w} h={t} /></ScrollEnd>
      <Space $grow={before} />
      <Thumb $h={h} $grow={thumb} $small={small}>{grip > 0 && <GripLines $h={h} $size={grip} />}</Thumb>
      <Space $grow={after} />
      <ScrollEnd type="button" $h={h} $size={size} aria-label={h ? "Scroll right" : "Scroll down"}><Tri dir={h ? "right" : "down"} w={w} h={t} /></ScrollEnd>
    </Scroll>
  );
}

/* ---------- scene content ---------- */

const LINKS = [
  { pts: [[673, 399], [790, 394]], label: "run_func", at: [701, 398] },
  { pts: [[828, 357], [805, 309], [735, 272], [778, 235]], label: "ASAP_2", at: [817, 334] },
  { pts: [[924, 357], [965, 271], [941, 241]], label: "bottom_side_socket_o_a", at: [945, 314] },
  { pts: [[937, 357], [995, 263], [980, 223], [946, 217]], label: "plot", at: [949, 337] },
  { pts: [[1089, 414], [1012, 210], [946, 215]], label: "plot", at: [1080, 392] },
  { pts: [[1097, 414], [1105, 358]], label: "variable", at: [1101, 386] },
  { pts: [[1106, 414], [1137, 381]], label: "data", at: [1122, 397] },
  { pts: [[1111, 426], [1159, 427]], label: "sheet", at: [1135, 427] },
  { pts: [[1106, 441], [1120, 481]], label: "sql", at: [1112, 461] },
  { pts: [[1120, 251], [1122, 239]] },
  { pts: [[1156, 360], [1165, 351]] },
  { pts: [[1178, 427], [1191, 427]] },
  { pts: [[1136, 524], [1140, 536]] },
  { pts: [[979, 389], [1008, 386]] },
  { pts: [[1035, 391], [1083, 416]], label: "hub", at: [1054, 402] },
  { pts: [[980, 423], [1034, 471]], label: "script", at: [999, 439] },
  { pts: [[1037, 474], [1084, 436]], label: "hub", at: [1055, 459] },
  { pts: [[943, 512], [1032, 475]], label: "hub", at: [962, 504] },
  { pts: [[943, 551], [1012, 588], [1034, 671], [1314, 673], [1336, 628]], label: "table", at: [964, 563] },
  { pts: [[790, 423], [656, 508]], label: "clock", at: [771, 435] },
  { pts: [[681, 656], [836, 652]], label: "pulsed_event", at: [715, 655] },
  { pts: [[1224, 574], [1297, 575]], label: "table", at: [1248, 575] },
];

const JOINTS = [[805, 309], [735, 272], [965, 271], [995, 263], [980, 223], [1012, 210], [1012, 588], [1034, 671], [1314, 673]];

function Links() {
  return (
    <LinkLayer aria-hidden="true">
      <defs>
        <marker id="head" markerUnits="userSpaceOnUse" markerWidth="10" markerHeight="6" refX="9" refY="3" orient="auto">
          <path d="M0 0L10 3L0 6Z" fill="#333" />
        </marker>
      </defs>
      <g transform={`translate(${-ORIGIN.x} ${-ORIGIN.y})`}>
        {LINKS.map(({ pts, label, at }, i) => {
          let angle = 0;
          if (label) {
            const [a, b] = pts;
            angle = (Math.atan2(b[1] - a[1], b[0] - a[0]) * 180) / Math.PI;
            if (angle > 90) angle -= 180;
            if (angle < -90) angle += 180;
          }
          const long = label ? label.length * 3 + 2 : 0;
          return (
            <g key={i}>
              <polyline points={pts.join(" ")} fill="none" stroke="#4a4a4a" strokeWidth="1.500" markerEnd="url(#head)" />
              {label && (
                <g transform={`translate(${at[0]} ${at[1]}) rotate(${angle})`}>
                  <rect x={-long / 2} y="-3" width={long} height="6" fill="#fff" />
                  <text y="2" textAnchor="middle" fontSize="5" fontFamily={MONO} fill="#444">{label}</text>
                </g>
              )}
            </g>
          );
        })}
        {JOINTS.map(([x, y]) => <circle key={`${x}-${y}`} cx={x} cy={y} r="5.500" fill="#c0c0c0" />)}
        <circle cx="1022" cy="387" r="12" fill="#fff" stroke="#777" strokeWidth="4" />
        <circle cx="1097" cy="428" r="12" fill="#fff" stroke="#777" strokeWidth="4" />
        <circle cx="1037" cy="475" r="4.500" fill="#6e6e6e" />
        <path d="M1033 454h16v11h-9l-3 9-1-9h-3z" fill="#4a9ff5" />
        <path d="M791 164h17v10h-9l-4 6v-6h-4z" fill="#4a9ff5" />
      </g>
    </LinkLayer>
  );
}

function Node({ x, y, w, h, color, icon, title, play, down, pad, children, extra }) {
  return (
    <Part $x={x} $y={y} $w={w} $h={h} $color={color}>
      <PartHead $color={color}>
        {ICONS[icon]}
        <PartTitle>{title}</PartTitle>
        {play && <Play w={8} h={9} color="#003a91" />}
        {down && <Svg s={10} vb="0 0 10 10"><path d="M3.500.5h3v4H9L5 9.500.8 4.500h2.700z" fill="none" stroke="#700" strokeWidth="1.300" /></Svg>}
        <MiniMark />
      </PartHead>
      <PartBody $pad={pad}>{children}</PartBody>
      {extra}
    </Part>
  );
}

const Row = ({ label, value, w, mono }) => (
  <Field $label={w}>
    {label}
    <TinyInput $mono={mono} readOnly value={value} />
  </Field>
);

function Tile({ x, y, name }) {
  return (
    <FxTile $x={x} $y={y} $w={81} $h={81}>
      <TileTools><Play w={8} h={9} color="#003a91" /><MiniMark open /></TileTools>
      <Svg w={48} h={50} vb="0 0 48 50">
        <text x="8" y="36" fill="#fff" fontFamily={SERIF} fontStyle="italic" fontWeight="bold" fontSize="40">f</text>
        <text x="22" y="34" fill="#fff" fontFamily={SERIF} fontStyle="italic" fontSize="18">(x)</text>
      </Svg>
      <TileName>{name}</TileName>
    </FxTile>
  );
}

const SHEET = [
  ["1", "0", "0", "0", "565...", "0", "0", "0"],
  ["5", "6566", "0", "0", "0", "0", "0", "0"],
  ["878", "0", "67633", "0", "0", "0", "0", "0"],
];

const PEOPLE = [
  ["478357854", "Mary Jane", "General"],
  ["487734834", "Alex Rush", "Lieutenant-\nGeneral"],
  ["968969506", "GI Joe", "Captain"],
];

function SceneView() {
  return (
    <Scene>
      <Selection $x={774} $y={175} $w={177} $h={90} />
      <SelectionMark $x={843} $y={262} $w={38} $h={3} />
      <SelectionMark $x={940} $y={262} $w={11} $h={3} />
      <SelectionMark $x={948} $y={211} $w={3} $h={16} />
      <SelectionMark $x={948} $y={254} $w={3} $h={11} />
      <Links />
      <Banner $x={938} $y={110} $w={104} $h={20}><Gears s={14} />root_actor</Banner>
      <Note $x={1316} $y={143} $w={189} $h={75}>This scenario shows all types of parts, with some comments, links, interface parts, decluttered links, etc.</Note>

      <Node x={570} y={172} w={119} h={61} color={PINK} icon="calendar" title="datetime" pad="8px 5px 0">
        <Row label="Date:" value="2017/11/22" w={19} />
        <Row label="Time:" value="15:44:48" w={19} />
      </Node>
      <Node x={568} y={260} w={119} h={66} color={PINK} icon="watch" title="time" pad="8px 5px 0">
        <Row label="Elapsed Time:" value="0335 00:00:00" w={41} />
      </Node>
      <Placed $x={594} $y={346} $w={18} $h={18}><FaRegHandPointRight size={18} color="#11a011" /></Placed>
      <Tile x={593} y={363} name="startup" />
      <Node x={518} y={490} w={138} h={84} color="#f08cc5" icon="clock" title="clock" pad="8px 6px 0 5px">
        <Row label="Date/Time:" value="2000/12/01   00:00:00" w={34} />
        <Row label="Ticks:" value="984800.000000" w={34} />
        <Row label="Tick Period:" value="30 Seconds" w={34} />
      </Node>
      <Node x={545} y={620} w={138} h={78} color={PINK} icon="pulse" title="pulse" pad="8px 5px 0">
        <Row label="Period:" value="1 Day" w={25} />
        <Row label="State:" value="Active" w={25} />
        <Row label="Priority:" value="1000000" w={25} />
      </Node>
      <Tile x={836} y={614} name="pulsed_e" />

      <Node x={790} y={180} w={145} h={80} color="#d60000" icon="gears" title="ASAP_events" down
        extra={
          <>
            <Ports $side="left">
              <Port $color="#8c8c8c" $gap={3}><Gear s={11} color="#555" />multipl…</Port>
              <Port $color={BLUE}>{ICONS.portFx}ASAP_2</Port>
              <Port $color={BLUE}>{ICONS.portFx}function</Port>
            </Ports>
            <Ports $side="right">
              <Port $color="#bf5f00" $tall $end $gap={4}>plot<Svg s={10} vb="0 0 10 10"><path d="M.5.5h9v9h-9zM2 7l3-4 1 2 3-4" fill="none" stroke="#f0c090" /></Svg></Port>
              <Port $color="#8c8c8c" $end $gap={4}>bottom_…<Svg s={8} vb="0 0 8 8"><circle cx="4" cy="4" r="2" fill="#555" /></Svg></Port>
            </Ports>
          </>
        }
      />
      <Node x={790} y={356} w={191} h={78} color={BLUE} icon="fx" title="function" play pad="6px 3px 2px 2px">
        <Row label="Parameters:" value="signals_to_raise:int" w={35} mono />
        <CodeBox>
          <Code>{'print("run_func({})".format(signals_to\nif signals_to_raise - 1 > 0:\n    signal(self, signals_to_raise - 1,'}</Code>
          <Scrollbar before={1} thumb={8} after={4} size={8} grip={0} />
          <Scrollbar h before={2} thumb={85} after={69} size={9} grip={5} />
        </CodeBox>
      </Node>
      <Node x={793} y={490} w={151} h={88} color={BLUE} icon="scroll" title="library" play pad="5px 3px 2px">
        <CodeBox $line>
          <Code $top={3}>{"def queue_events(t2):\n    signal(P.time_t2_priority_1\n    signal(P.time_t2_priority_2\n    signal(P.time_t2_priority_3"}</Code>
          <span />
          <Scrollbar h before={0} thumb={60} after={60} size={9} grip={5} />
        </CodeBox>
      </Node>
      <Node x={1096} y={536} w={130} h={82} color={BLUE} icon="sql" title="sql" play pad="6px 2px 2px">
        <Row label="Parameters:" value="passed_rank" w={35} mono />
        <CodeBox>
          <Code $top={2}>{"Select * from {{link.table}"}</Code>
          <span />
          <Scrollbar h before={0} thumb={47} after={56} size={9} grip={5} />
        </CodeBox>
      </Node>

      <Node x={1060} y={178} w={153} h={61} color={GREEN} icon="x" title="variable" pad="18px 5px 0">
        <span>Value =&nbsp;&nbsp;42</span>
      </Node>
      <Node x={1159} y={252} w={241} h={99} color={GREEN} icon="list" title="data" pad="4px 0 0 1px">
        <DataTable $head={14} $row={16}>
          <colgroup><Col $w={30} /><Col $w={202} /><Col /></colgroup>
          <thead><tr><th>Key</th><th>Value</th><th /></tr></thead>
          <tbody>
            <tr><td>salary</td><td>[40000, 50000, 60000, 70000, 80000, 90000, 100000]</td></tr>
            <tr><td>rank</td><td>["General", "Lieutenant-General", "Colonel"]</td></tr>
          </tbody>
        </DataTable>
      </Node>
      <Node x={1191} y={382} w={191} h={98} color={GREEN} icon="grid" title="sheet" pad="9px 5px 4px">
        <GridRow>
          <Grid $head={13} $row={17}>
            <colgroup><Col $w={8} /></colgroup>
            <thead><tr><th />{"ABCDEFGH".split("").map((c) => <th key={c}>{c}</th>)}</tr></thead>
            <tbody>{SHEET.map((r, i) => <tr key={i}><th>{i + 1}</th>{r.map((c, j) => <td key={j}>{c}</td>)}</tr>)}</tbody>
          </Grid>
          <Scrollbar before={0} thumb={17} after={35} size={9} grip={5} />
        </GridRow>
      </Node>
      <Node x={1297} y={529} w={192} h={99} color="#006b3c" icon="table" title="table" pad="9px 6px 5px 5px">
        <GridRow>
          <Grid $head={14} $row={17} $color="#777">
            <colgroup><Col $w={8} /></colgroup>
            <thead><tr><th /><th>ID</th><th>Name</th><th>Rank</th></tr></thead>
            <tbody>{PEOPLE.map((r, i) => <tr key={i}><th>{i + 1}</th>{r.map((c) => <td key={c}>{c}</td>)}</tr>)}</tbody>
          </Grid>
        </GridRow>
      </Node>
    </Scene>
  );
}

/* ---------- panels ---------- */

const Head = ({ children }) => (
  <DockTitle>
    <DockName>{children}</DockName>
    <IconButton type="button" aria-label="Float"><Restore /></IconButton>
    <IconButton type="button" aria-label="Close"><Close /></IconButton>
  </DockTitle>
);

const TREE = [
  ["root_actor", 0, "open", true],
  ["ASAP_events", 1, "open"],
  ["promotion", 2, "open"],
  ["rank", 3],
  ["salary", 3],
  ["skillsets", 3],
  ["actor", 2],
  ["actor", 2],
  ["ASAP_events", 1, "closed"],
];

const TwistyIcon = ({ state }) => (
  <Svg s={7} vb="0 0 7 7">
    {state === "open" ? <path d="M6.500 0v6.500H0z" fill="#333" /> : <path d="M1.500.5l4 3-4 3z" fill="#fff" stroke="#999" />}
  </Svg>
);

function ScenarioBrowser() {
  return (
    <Dock $width="277px">
      <Head>Scenario Browser</Head>
      <BrowserBody>
        <Box $flex="231 1 0">
          <BoxHead>Actor Hierarchy</BoxHead>
          <Tree>
            {TREE.map(([name, depth, state, selected], i) => (
              <TreeItem key={i} $depth={depth}>
                <Twisty>{state && <TwistyIcon state={state} />}</Twisty>
                <TreeLabel $selected={selected}>{name}</TreeLabel>
              </TreeItem>
            ))}
          </Tree>
        </Box>
        <Bar />
        <SearchRow>
          <TextField aria-label="Search text" />
          <PushButton type="button" $width="73px">Search</PushButton>
        </SearchRow>
        <Box $flex="376 1 0" />
      </BrowserBody>
    </Dock>
  );
}

function CanvasArea() {
  return (
    <Center>
      <PathBar>
        <PushButton type="button" $width="20px" $height={16} aria-label="Expand">
          <Svg s={12} vb="0 0 12 12"><path d="M1 7v4h4zM11 5V1H7zM2 10l8-8" fill="#000" stroke="#000" /></Svg>
        </PushButton>
        <PushButton type="button" $width="20px" $height={16} aria-label="Back">
          <Svg w={10} h={9} vb="0 0 10 9"><path d="M0 4.500L5 0v3h5v3H5v3z" fill="#555" /></Svg>
        </PushButton>
        <PushButton type="button" $width="20px" $height={16} disabled aria-label="Forward">
          <Svg w={10} h={9} vb="0 0 10 9"><path d="M10 4.500L5 0v3H0v3h5v3z" fill="#aaa" /></Svg>
        </PushButton>
        <span>root_actor</span>
      </PathBar>
      <CanvasRow>
        <Strip type="button" aria-label="Collapse left"><Tri dir="left" w={7} h={12} color="#000" /></Strip>
        <Tools>
          {EDIT_TOOLS.map((t, i) =>
            t ? <PushButton type="button" key={i} $width="21px" $height={20} aria-label={t[0]}>{t[1]}</PushButton> : <ToolsRule key={i} />
          )}
        </Tools>
        <CanvasFrame>
          <SceneView />
          <Scrollbar before={90} thumb={462} after={66} />
          <Scrollbar h before={173} thumb={579} after={450} />
        </CanvasFrame>
        <Strip type="button" aria-label="Collapse right"><Tri dir="right" w={7} h={12} color="#000" /></Strip>
      </CanvasRow>
      <Strip type="button" $horizontal aria-label="Collapse bottom"><Tri dir="down" w={13} h={7} color="#000" /></Strip>
    </Center>
  );
}

const HELP = `Actors are containers for model logic. They can be used to hide low-level details from a higher level view.

Use the interface setting on any descendant's part frame to make it visible on the interface of ancestor parts. For example given root -> actor1 -> actor2 -> part, and part interface level is 2, then part is on the interface of actor1, so it is accessible by any part in root, including descendants of root that are visible by root.

Double-click to edit.`;

function RightDocks() {
  return (
    <Dock $width="288px">
      <Dock $flex="0 0 258px">
        <Head>Context Help</Head>
        <HelpBody>
          <HelpLine><b>Part Type:</b> <span>Actor</span></HelpLine>
          <HelpLine $mono><b>Part Name:</b> <Mono>skillsets</Mono></HelpLine>
          <TextArea aria-label="Context help" readOnly value={HELP} $pad="6px 0 5px 2px" />
        </HelpBody>
      </Dock>
      <HSplit />
      <Dock $flex="1">
        <Head>Object Properties</Head>
        <PropsBody>
          <Group $pad="12px 9px 12px 9px">
            <Legend>General</Legend>
            <svg width="50" height="50" viewBox="0 0 50 50" aria-hidden="true"><path d="M0 0h50v50H0z" fill="#d60000" /><Gears s={50} disc /></svg>
            <PropGrid $label={44} $rows="20px 20px" $top={2}>
              <PropLabel htmlFor="type">Type:</PropLabel>
              <TextField id="type" readOnly value="actor" />
              <PropLabel htmlFor="name">Name:</PropLabel>
              <TextField id="name" $mono defaultValue="ASAP_events" />
            </PropGrid>
          </Group>
          <Group $pad="10px 9px 28px 8px" $flex="1">
            <Legend>Part</Legend>
            <PropGrid $label={84} $rows="21px 1fr 18px 18px">
              <PropLabel htmlFor="level">Interface Level:</PropLabel>
              <SelectWrap>
                <Select id="level" defaultValue="0"><option value="0">0: ASAP_events</option></Select>
                <Tri dir="down" w={7} h={4} color="#000" />
              </SelectWrap>
              <PropLabel htmlFor="comment" $tall>Comment:</PropLabel>
              <TextArea id="comment" defaultValue="Encapsulate ASAP events and plot results." />
              <PropLabel htmlFor="px">X:</PropLabel>
              <TextField id="px" $height={18} defaultValue="-9.10" />
              <PropLabel htmlFor="py">Y:</PropLabel>
              <TextField id="py" $height={18} defaultValue="11.67" />
            </PropGrid>
          </Group>
        </PropsBody>
      </Dock>
    </Dock>
  );
}

function Alerts() {
  return (
    <Dock $flex="910 1 0">
      <Head>Alerts</Head>
      <AlertsBody>
        <Counts><span>Errors:&nbsp; 0</span><span>Warnings:&nbsp; 0</span><span>Filter:&nbsp; None</span></Counts>
        <AlertsColumns>
          <AlertsLeft>
            <AlertsTableBox>
              <AlertsTable>
                <colgroup><Col $w={48} /><Col $w={100} /><Col $w={101} /><Col /></colgroup>
                <thead><tr><th>Type</th><th>Component</th><th>Category</th><th /></tr></thead>
              </AlertsTable>
            </AlertsTableBox>
            <Buttons>
              <PushButton type="button" $flex="1">Validate</PushButton>
              <PushButton type="button" $flex="1" disabled>Filter</PushButton>
            </Buttons>
          </AlertsLeft>
          <Group $pad="9px 9px 8px" $column>
            <Legend>Details</Legend>
            <TextArea aria-label="Details" readOnly />
          </Group>
        </AlertsColumns>
      </AlertsBody>
      <Tabs>
        <Tab type="button" $active>Alerts</Tab>
        <Tab type="button">Application Log</Tab>
        <Tab type="button">Event Queue</Tab>
      </Tabs>
    </Dock>
  );
}

const Digits = () => (
  <Svg w={17} h={14} vb="0 0 17 14"><text x="8.500" y="11" textAnchor="middle" fontFamily='"Liberation Sans", sans-serif' fontWeight="bold" fontSize="12">0.0</text></Svg>
);

function SimControl() {
  return (
    <Dock $flex="1005 1 0">
      <Head>Main Simulation Control</Head>
      <SimFrame>
        <SimMain>
          <SimInfo>
            <SimState>
              <Paused>Paused</Paused>
              <Percent>0% <Small>complete</Small></Percent>
            </SimState>
            <Rule />
            <SimCol $right={67}>
              <SimRow><Fill>Sim Stop Time:</Fill><PushButton type="button" $width="21px" $height={20} aria-label="Edit sim stop time"><FaPen size={12} /></PushButton></SimRow>
              <SimRow><Fill>Wall Clock Stop Time:</Fill><PushButton type="button" $width="21px" $height={20} aria-label="Edit wall clock stop time"><FaPen size={12} /></PushButton></SimRow>
              <SimRow>
                <CheckLabel>Animation <Check type="checkbox" defaultChecked /></CheckLabel>
                <CheckLabel>Debug <Check type="checkbox" /></CheckLabel>
                <Fill />
                <PushButton type="button" $width="73px">Set Seed...</PushButton>
              </SimRow>
            </SimCol>
            <Rule />
            <SimCol $right={70}>
              <SimRow><Fill>Sim Time:</Fill><span>0001 00:00:00</span><PushButton type="button" $width="21px" $height={20} aria-label="Reset sim time"><Digits /></PushButton></SimRow>
              <SimRow><Fill>Wall Clock Time:</Fill><span>0000 00:00:00</span><PushButton type="button" $width="21px" $height={20} aria-label="Reset wall clock time"><Digits /></PushButton></SimRow>
              <SimRow><Fill>Events:</Fill><span>0</span><PushButton type="button" $width="21px" $height={20} disabled aria-label="Clear events"><Trash s={15} /></PushButton></SimRow>
            </SimCol>
          </SimInfo>
          <SimActions>
            <BigButton type="button"><Power s={26} /><BigLabel $two>Run<br />Simulation</BigLabel></BigButton>
            <Rule />
            <Stack>
              <PushButton type="button" $width="78px" $height={28} $left><Back s={15} />Reset Sim</PushButton>
              <PushButton type="button" $width="78px" $height={28} $left><Svg w={15} h={13} vb="0 0 15 13"><path d="M0 4h2v5H0zM3 4h4V0l8 6.500L7 13V9H3z" fill="#111" /></Svg>Start Sim</PushButton>
              <PushButton type="button" $width="78px" $height={28} $left disabled><Svg s={13} vb="0 0 13 13"><path d="M0 0h13v13H0z" fill="#555" /></Svg>End Sim</PushButton>
            </Stack>
            <Rule />
            <BigButton type="button"><Play w={22} h={30} color="#2fb82f" /><BigLabel>Play</BigLabel></BigButton>
            <BigButton type="button"><StepIcon w={30} h={30} /><BigLabel>Step</BigLabel></BigButton>
            <Rule />
            <Fill />
            <Rule />
            <Stack>
              <PushButton type="button" $width="129px" $height={20} $left><Svg s={15} vb="0 0 15 15"><circle cx="7.500" cy="10" r="5" fill="#ff7300" /><path d="M2 4q5.500-5 11 0" fill="none" stroke="#ff7300" strokeWidth="1.600" /><path d="M9 7l3-3" stroke="#ff7300" strokeWidth="2" /></Svg>Run Setup Parts...</PushButton>
              <PushButton type="button" $width="129px" $height={20} $left><Svg w={15} h={12} vb="0 0 15 12"><path d="M0 4.500h4V2l4.500 4L4 10V7.500H0z" fill="#0a7cff" /><ellipse cx="12" cy="6" rx="2" ry="4.500" fill="none" stroke="#0a7cff" strokeWidth="1.700" /></Svg>Run Reset Parts</PushButton>
              <PushButton type="button" $width="129px" $height={20} $left><FaRegHandPointRight size={15} color="#0ca60c" />Run Startup Parts</PushButton>
              <PushButton type="button" $width="129px" $height={20} $left disabled><Svg s={14} vb="0 0 14 14"><path d="M1 1h12v9H3v4z" fill="#555" /><path d="M4 2h3v3H4zM10 2h3v3h-3zM7 5h3v3H7z" fill="#ddd" /></Svg>Run Finish Parts</PushButton>
            </Stack>
            <Rule />
            <BigButton type="button"><Gear s={30} color="#858585" /><BigLabel>Settings</BigLabel></BigButton>
          </SimActions>
        </SimMain>
        <SimScroll><Scrollbar before={0} thumb={149} after={9} /></SimScroll>
      </SimFrame>
      <Tabs>
        <Tab type="button" $active>Main Simulation Control</Tab>
        <Tab type="button">Batch Simulation Control</Tab>
      </Tabs>
    </Dock>
  );
}

export default function App() {
  return (
    <Window>
      <Global />
      <TitleBar>
        <Svg s={16} vb="0 0 16 16"><circle cx="8" cy="8" r="7.500" fill="#dfeae8" stroke="#35506a" /><path d="M2 4l5 1-1 4-4 1zM9 1l4 2-1 5-4-3zM6 10l4 0-1 5-3-2zM12 9l3 0-3 4z" fill="#2f8a5c" /></Svg>
        <TitleText>Scenario: user_manual_ex.ori [C:\Users\r4hr-dev\Documents\R4_Src\docs\User Manual\user_manual_ex.ori] - Origame</TitleText>
        <Caption>
          <CaptionButton type="button" aria-label="Minimize"><Svg w={12} h={5} vb="0 0 12 5"><path d="M.5.5h11v4H.5z" fill="#fff" stroke="#445" /></Svg></CaptionButton>
          <CaptionButton type="button" aria-label="Restore"><Svg s={12} vb="0 0 12 12"><path d="M3 1h8v8H3zM1 3h8v8H1z" fill="#fff" stroke="#445" /><path d="M4 6h2v2H4z" fill="#667" /></Svg></CaptionButton>
          <CaptionButton type="button" $close aria-label="Close"><Svg w={12} h={10} vb="0 0 12 10"><path d="M2 1l8 8M10 1l-8 8" stroke="#445" strokeWidth="4" /><path d="M2 1l8 8M10 1l-8 8" stroke="#fff" strokeWidth="2.400" /></Svg></CaptionButton>
        </Caption>
      </TitleBar>
      <MenuBar>
        {["File", "Edit", "View", "Simulation", "Help"].map((m) => <MenuButton type="button" key={m}>{m}</MenuButton>)}
      </MenuBar>
      <Toolbar>
        <Grip />
        {TOOLBAR.map((t, i) => (t ? <ToolButton type="button" key={i} $pressed={t[2]} aria-label={t[0]}>{t[1]}</ToolButton> : <ToolSep key={i} />))}
      </Toolbar>
      <Middle>
        <ScenarioBrowser />
        <VSplit />
        <CanvasArea />
        <VSplit />
        <RightDocks />
      </Middle>
      <HSplit />
      <Bottom>
        <Alerts />
        <VSplit />
        <SimControl />
      </Bottom>
      <StatusBar>
        <StatusBox $gap={5}><StatusName>Main Sim</StatusName><b>State:</b><span>Paused</span><b>Time:</b><span>0001 00:00:00</span><b>Events:</b><span>0</span></StatusBox>
        <StatusBox $gap={6}><StatusName>Batch Sim</StatusName><b>State:</b><span>&lt;none&gt;</span><b>Completed:</b><span>0</span><b>/</b><span>0</span></StatusBox>
      </StatusBar>
    </Window>
  );
}
